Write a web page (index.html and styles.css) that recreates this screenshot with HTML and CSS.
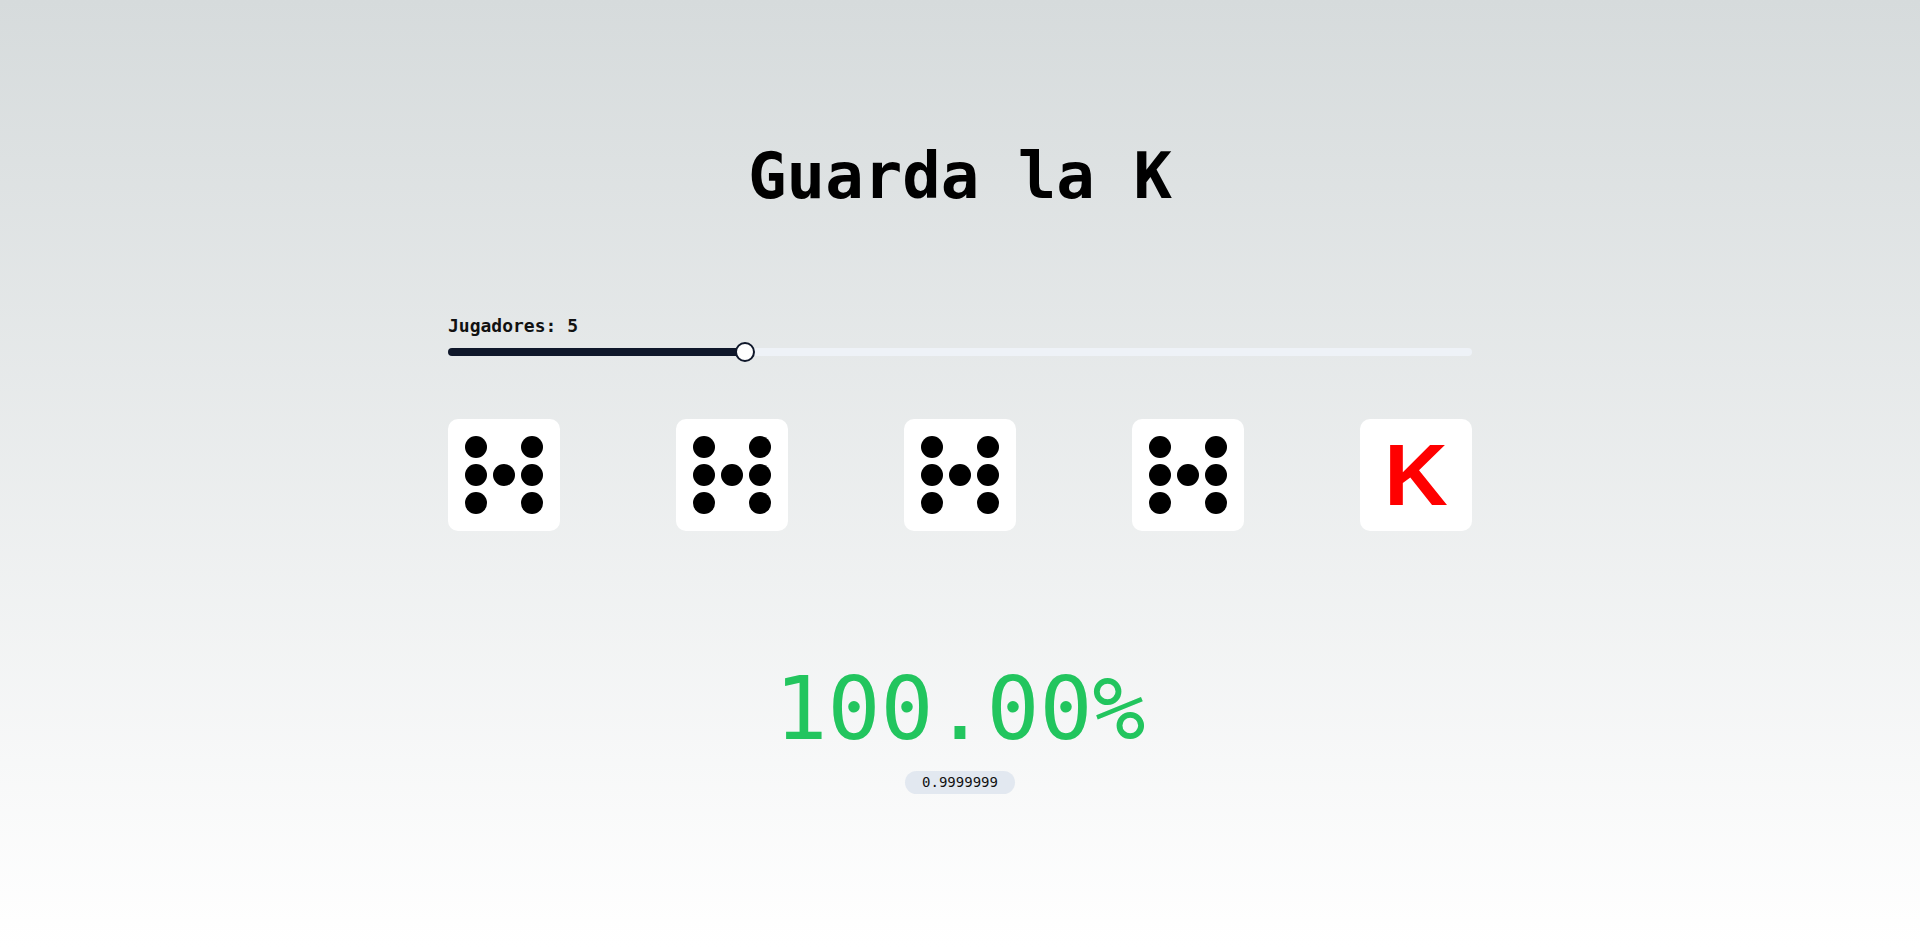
FILE: index.html
```html
<!DOCTYPE html>
<html lang="es">
<head>
    <meta charset="UTF-8">
    <meta name="viewport" content="width=device-width, initial-scale=1.0">
    <title>Guarda la K</title>
    <link rel="stylesheet" href="styles.css">
</head>
<body>
    <main class="game">
        <h1 class="title">Guarda la K</h1>

        <label class="playersLabel" for="players">Jugadores: <span id="playersValue">5</span></label>
        <input type="range" id="players" class="playersRange" min="1" max="15" value="5" style="background: linear-gradient(to right, #0f172a 28.57%, #eef2f7 28.57%);">

        <div class="dice">
            <div class="die">
                <span class="pip"></span><span class="pip empty"></span><span class="pip"></span>
                <span class="pip"></span><span class="pip"></span><span class="pip"></span>
                <span class="pip"></span><span class="pip empty"></span><span class="pip"></span>
            </div>
            <div class="die">
                <span class="pip"></span><span class="pip empty"></span><span class="pip"></span>
                <span class="pip"></span><span class="pip"></span><span class="pip"></span>
                <span class="pip"></span><span class="pip empty"></span><span class="pip"></span>
            </div>
            <div class="die">
                <span class="pip"></span><span class="pip empty"></span><span class="pip"></span>
                <span class="pip"></span><span class="pip"></span><span class="pip"></span>
                <span class="pip"></span><span class="pip empty"></span><span class="pip"></span>
            </div>
            <div class="die">
                <span class="pip"></span><span class="pip empty"></span><span class="pip"></span>
                <span class="pip"></span><span class="pip"></span><span class="pip"></span>
                <span class="pip"></span><span class="pip empty"></span><span class="pip"></span>
            </div>
            <div class="die kDie">K</div>
        </div>

        <p class="chance" id="chance">100.00%</p>
        <span class="rawChance" id="rawChance">0.9999999</span>
    </main>
</body>
</html>
```

FILE: styles.css
```css
html {
    min-height: 100%;
}
body {
    margin: 0;
    min-height: 947px;
    background: linear-gradient(to bottom, #d6dbdc, #ffffff);
    font-family: "DejaVu Sans Mono", monospace;
    color: #000;
}
.game {
    width: 1024px;
    margin: 0 auto;
    padding-top: 139px;
    display: flex;
    flex-direction: column;
}
.title {
    margin: 0;
    font-size: 64px;
    font-weight: bold;
    text-align: center;
}
.playersLabel {
    margin-top: 102px;
    font-size: 18px;
    font-weight: bold;
    color: #111;
}
.playersRange {
    -webkit-appearance: none;
    appearance: none;
    width: 100%;
    height: 8px;
    margin: 12px 0 0 0;
    border-radius: 4px;
    outline: none;
}
.playersRange::-webkit-slider-thumb {
    -webkit-appearance: none;
    width: 20px;
    height: 20px;
    border-radius: 50%;
    background: #fff;
    border: 2px solid #0f172a;
    box-sizing: border-box;
}
.dice {
    margin-top: 63px;
    display: flex;
    justify-content: space-between;
}
.die {
    width: 112px;
    height: 112px;
    background: #fff;
    border-radius: 10px;
    display: grid;
    grid-template-columns: repeat(3, 22px);
    grid-template-rows: repeat(3, 22px);
    gap: 6px;
    justify-content: center;
    align-content: center;
}
.pip {
    width: 22px;
    height: 22px;
    border-radius: 50%;
    background: #000;
}
.pip.empty {
    background: none;
}
.kDie {
    display: flex;
    justify-content: center;
    align-items: center;
    font-family: "Liberation Sans", Arial, sans-serif;
    font-weight: bold;
    font-size: 88px;
    color: #ff0000;
}
.chance {
    margin: 126px 0 0 0;
    font-size: 88px;
    color: #22c55e;
    text-align: center;
}
.rawChance {
    align-self: center;
    margin-top: 11px;
    padding: 2px 17px;
    border-radius: 12px;
    background: #e2e8f0;
    font-size: 14px;
    line-height: 19px;
    color: #111;
}
```
